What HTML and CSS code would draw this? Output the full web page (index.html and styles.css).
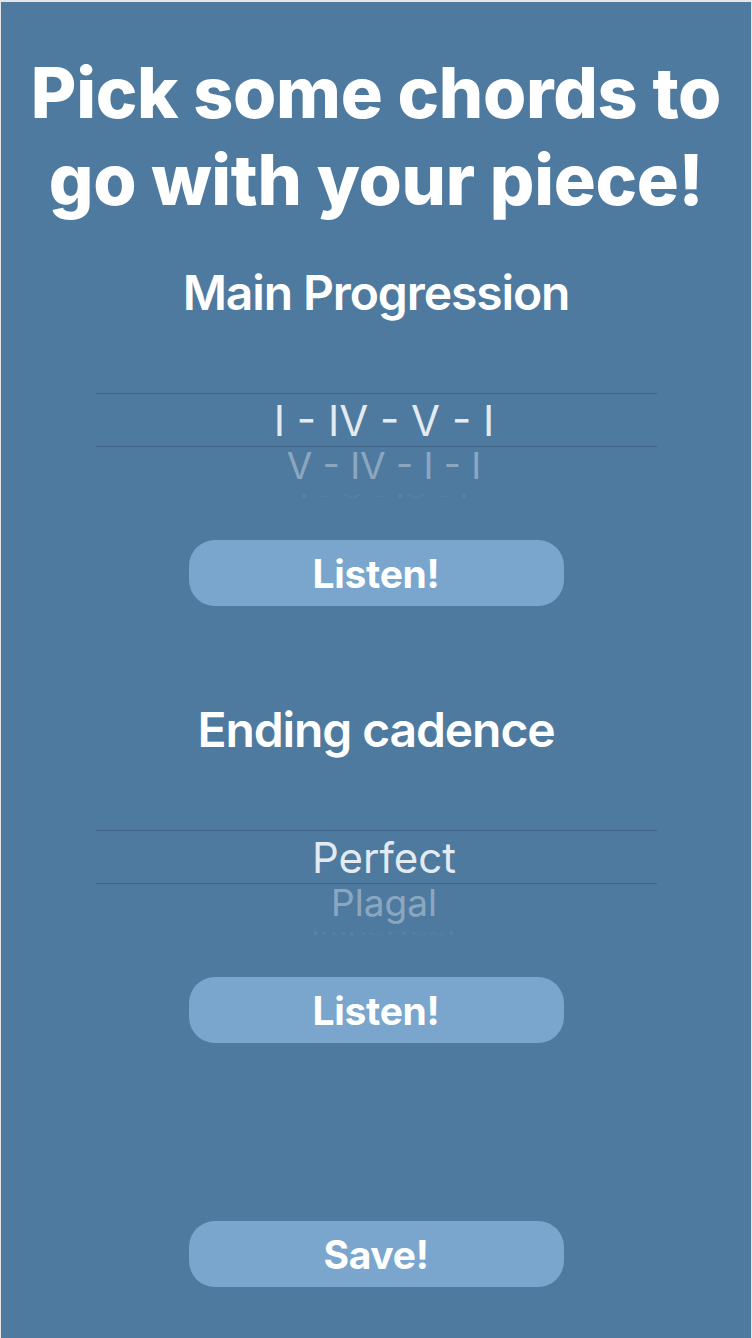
FILE: index.html
```html
<!DOCTYPE html>
<html lang="en">
<head>
<meta charset="utf-8">
<title>Pick chords</title>
<link rel="stylesheet" href="styles.css">
</head>
<body>
<main class="screen">
  <h1 class="title">Pick some chords to<br>go with your piece!</h1>

  <section class="section">
    <h2 class="heading">Main Progression</h2>
    <div class="picker">
      <div class="row row-selected">I - IV - V - I</div>
      <div class="row row-next">V - IV - I - I</div>
      <div class="row row-far">I - V - IV - I</div>
    </div>
    <button class="btn" type="button">Listen!</button>
  </section>

  <section class="section section-second">
    <h2 class="heading">Ending cadence</h2>
    <div class="picker">
      <div class="row row-selected">Perfect</div>
      <div class="row row-next">Plagal</div>
      <div class="row row-far">Imperfect</div>
    </div>
    <button class="btn" type="button">Listen!</button>
  </section>

  <button class="btn btn-save" type="button">Save!</button>
</main>
</body>
</html>
```

FILE: styles.css
```css
* { box-sizing: border-box; }

html, body {
  margin: 0;
  padding: 0;
  background: #e6e6e6;
}

body {
  width: 752px;
  height: 1338px;
  overflow: hidden;
  padding: 2px 1px 0 1px;
  font-family: Inter, "Noto Sans", "Liberation Sans", sans-serif;
}

.screen {
  height: 1336px;
  background: #4f7aa0;
  display: flex;
  flex-direction: column;
  align-items: center;
  padding-top: 47px;
  color: #ffffff;
}

.title {
  margin: 0;
  font-size: 70px;
  line-height: 87px;
  font-weight: 800;
  letter-spacing: -0.3px;
  text-align: center;
}

.section {
  display: flex;
  flex-direction: column;
  align-items: center;
  width: 100%;
}

.heading {
  margin: 41px 0 0;
  font-size: 48px;
  line-height: 58px;
  font-weight: 600;
  letter-spacing: -1.1px;
  text-align: center;
}

.section-second .heading {
  margin-top: 95px;
}

.picker {
  margin-top: 71px;
  width: 561px;
  height: 107px;
  display: flex;
  flex-direction: column;
}

.row {
  text-align: center;
  padding-left: 16px;
  font-weight: 400;
  white-space: nowrap;
}

.row-selected {
  height: 54px;
  border-top: 1px solid #3f6386;
  border-bottom: 1px solid #3f6386;
  font-size: 42px;
  line-height: 51px;
  padding-top: 1px;
  color: rgba(255, 255, 255, 0.86);
}

.row-next {
  height: 38px;
  margin-top: 2px;
  font-size: 37px;
  line-height: 36px;
  color: rgba(255, 255, 255, 0.36);
  transform: scaleY(0.98);
  transform-origin: center top;
}

.row-far {
  margin-top: 8px;
  height: 6px;
  font-size: 32px;
  line-height: 32px;
  color: rgba(255, 255, 255, 0.07);
  transform: scaleY(0.14);
  transform-origin: center top;
}

.btn {
  margin-top: 40px;
  width: 375px;
  height: 66px;
  border: 0;
  border-radius: 26px;
  background: #7aa6ce;
  color: #ffffff;
  font-family: Inter, "Noto Sans", "Liberation Sans", sans-serif;
  font-size: 39px;
  font-weight: 700;
  letter-spacing: -0.3px;
  display: flex;
  align-items: center;
  justify-content: center;
  padding: 0;
}

.btn-save {
  margin-top: 178px;
}
```
